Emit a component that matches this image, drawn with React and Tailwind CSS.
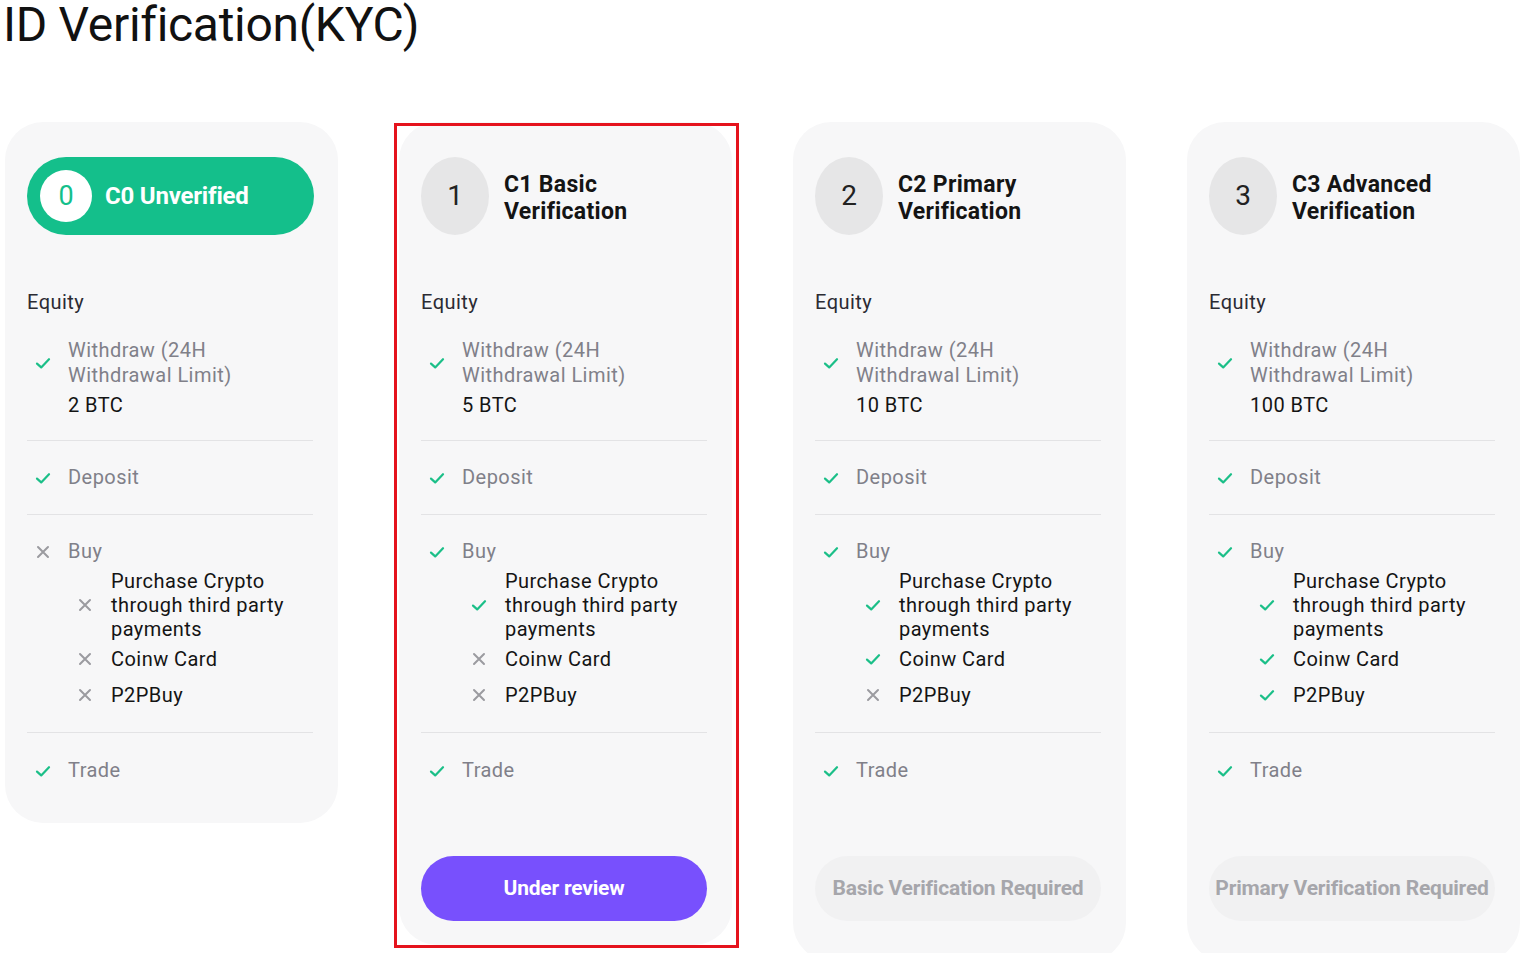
import React from "react";

const font = { fontFamily: "Roboto, 'Noto Sans', sans-serif" };

function Check({ className = "" }) {
  return (
    <svg viewBox="0 0 16 16" className={`w-[16px] h-[16px] shrink-0 ${className}`} fill="none">
      <path d="M2 8.6 L6.2 12.4 L14 4.2" stroke="#1bbf88" strokeWidth="2.2" strokeLinecap="round" strokeLinejoin="round" />
    </svg>
  );
}

function Cross({ className = "" }) {
  return (
    <svg viewBox="0 0 16 16" className={`w-[16px] h-[16px] shrink-0 ${className}`} fill="none">
      <path d="M3 3 L13 13 M13 3 L3 13" stroke="#9b9ba0" strokeWidth="2" strokeLinecap="round" />
    </svg>
  );
}

function Mark({ ok }) {
  return ok ? <Check /> : <Cross />;
}

const levels = [
  { n: "0", title: ["C0 Unverified"], limit: "2 BTC", buy: false, subs: [false, false, false], active: true },
  { n: "1", title: ["C1 Basic", "Verification"], limit: "5 BTC", buy: true, subs: [true, false, false], button: "Under review", highlight: true },
  { n: "2", title: ["C2 Primary", "Verification"], limit: "10 BTC", buy: true, subs: [true, true, false], button: "Basic Verification Required" },
  { n: "3", title: ["C3 Advanced", "Verification"], limit: "100 BTC", buy: true, subs: [true, true, true], button: "Primary Verification Required" },
];

const body = "text-[20px] leading-[25px] tracking-[0.45px]";

function Divider() {
  return <div className="h-px bg-[#e3e3e5]" />;
}

function Row({ ok, children }) {
  return (
    <div className="flex items-center h-[25px]">
      <div className="w-[41px] pl-[8px] flex items-center"><Mark ok={ok} /></div>
      <span className={`${body} text-[#808089]`}>{children}</span>
    </div>
  );
}

function Card({ lv }) {
  return (
    <div className={`relative bg-[#f7f7f8] rounded-[38px] pl-[22px] pr-[25px] pt-[35px] ${lv.highlight ? "pb-[24px]" : "pb-[40px]"}`}>
      {lv.highlight && (
        <div className="absolute left-[-5px] right-[-7px] top-[1px] bottom-[-3px] border-[3px] border-[#e5131d] pointer-events-none" />
      )}
      {lv.active ? (
        <div className="h-[78px] rounded-full bg-[#14bf8b] flex items-center pl-[13px] mr-[-1px]">
          <div className="w-[52px] h-[52px] rounded-full bg-white flex items-center justify-center text-[#14bf8b] text-[27px]">{lv.n}</div>
          <span className="ml-[13px] text-white text-[24px] font-bold tracking-[-0.2px]">{lv.title[0]}</span>
        </div>
      ) : (
        <div className="h-[78px] flex items-center">
          <div className="w-[68px] h-[78px] rounded-[50%] bg-[#e6e6e7] flex items-center justify-center text-[28px] text-[#222]">{lv.n}</div>
          <div className="ml-[15px] mt-[4px] text-[23px] font-bold leading-[27px] text-[#141414] tracking-[0.3px]">
            {lv.title.map((t) => (
              <div key={t}>{t}</div>
            ))}
          </div>
        </div>
      )}

      <div className={`mt-[55px] ${body} text-[#2b2b33]`}>Equity</div>

      <div className="mt-[23px] pb-[22px]">
        <div className="flex items-center">
          <div className="w-[41px] pl-[8px] flex items-center"><Check /></div>
          <div className={`${body} text-[#808089]`}>
            <div>Withdraw (24H</div>
            <div>Withdrawal Limit)</div>
          </div>
        </div>
        <div className={`pl-[41px] mt-[5px] ${body} text-[#141414]`}>{lv.limit}</div>
      </div>
      <Divider />

      <div className="py-[24px]">
        <Row ok>Deposit</Row>
      </div>
      <Divider />

      <div className="pt-[24px] pb-[25px]">
        <Row ok={lv.buy}>Buy</Row>
        <div className="mt-[5px] pl-[42px] text-[20px] leading-[24px] tracking-[0.45px] text-[#141414]">
          <div className="flex items-center">
            <div className="w-[42px] pl-[8px] flex items-center"><Mark ok={lv.subs[0]} /></div>
            <div>
              <div>Purchase Crypto</div>
              <div>through third party</div>
              <div>payments</div>
            </div>
          </div>
          <div className="flex items-center mt-[6px]">
            <div className="w-[42px] pl-[8px] flex items-center"><Mark ok={lv.subs[1]} /></div>
            <div>Coinw Card</div>
          </div>
          <div className="flex items-center mt-[12px]">
            <div className="w-[42px] pl-[8px] flex items-center"><Mark ok={lv.subs[2]} /></div>
            <div>P2PBuy</div>
          </div>
        </div>
      </div>
      <Divider />

      <div className="pt-[25px]">
        <Row ok>Trade</Row>
      </div>

      {lv.button && (
        <div
          className={`mt-[73px] h-[65px] rounded-full flex items-center justify-center text-[21px] font-bold tracking-[-0.2px] whitespace-nowrap ${
            lv.highlight ? "bg-[#7850fd] text-white" : "bg-[#f1f1f2] text-[#a6a6ab]"
          }`}
        >
          {lv.button}
        </div>
      )}
    </div>
  );
}

export default function App() {
  return (
    <div className="w-[1531px] h-[953px] overflow-hidden bg-white" style={font}>
      <h1 className="pl-[3px] pt-[1px] text-[48px] leading-[48px] text-[#111] tracking-[-0.3px] font-normal">ID Verification(KYC)</h1>
      <div className="mt-[73px] pl-[5px] grid grid-cols-[333px_333px_333px_333px] gap-x-[61px] items-start">
        {levels.map((lv) => (
          <Card key={lv.n} lv={lv} />
        ))}
      </div>
    </div>
  );
}
